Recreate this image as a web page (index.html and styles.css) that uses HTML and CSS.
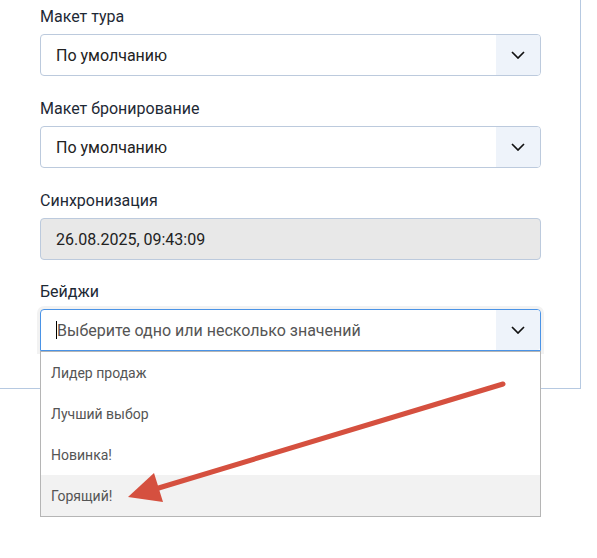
FILE: index.html
```html
<!DOCTYPE html>
<html lang="ru">

<head>
    <meta charset="UTF-8">
    <meta name="viewport" content="width=device-width, initial-scale=1.0">
    <title>Настройки тура</title>
    <link rel="stylesheet" href="styles.css">
</head>

<body>
    <div class="panel">
        <div class="field">
            <label class="field-label">Макет тура</label>
            <div class="select">
                <div class="select-value">По умолчанию</div>
                <div class="select-btn">
                    <svg width="14" height="8" viewBox="0 0 14 8"><path d="M1 1l6 6 6-6" fill="none" stroke="#111" stroke-width="1.7"/></svg>
                </div>
            </div>
        </div>

        <div class="field">
            <label class="field-label">Макет бронирование</label>
            <div class="select">
                <div class="select-value">По умолчанию</div>
                <div class="select-btn">
                    <svg width="14" height="8" viewBox="0 0 14 8"><path d="M1 1l6 6 6-6" fill="none" stroke="#111" stroke-width="1.7"/></svg>
                </div>
            </div>
        </div>

        <div class="field field-sync">
            <label class="field-label">Синхронизация</label>
            <div class="input-readonly">26.08.2025, 09:43:09</div>
        </div>

        <div class="field field-last">
            <label class="field-label">Бейджи</label>
            <div class="select select-open">
                <div class="select-value placeholder"><span class="caret"></span>Выберите одно или несколько значений</div>
                <div class="select-btn">
                    <svg width="14" height="8" viewBox="0 0 14 8"><path d="M1 1l6 6 6-6" fill="none" stroke="#111" stroke-width="1.7"/></svg>
                </div>
            </div>
        </div>
    </div>

    <!-- dropdown of the badges select, hangs below the panel -->
    <ul class="options">
        <li>Лидер продаж</li>
        <li>Лучший выбор</li>
        <li>Новинка!</li>
        <li class="hover">Горящий!</li>
    </ul>

    <!-- pointer arrow drawn over the list -->
    <svg class="pointer" width="597" height="558" viewBox="0 0 597 558">
        <line x1="503" y1="384" x2="152" y2="490" stroke="#d5503f" stroke-width="5" stroke-linecap="round"/>
        <polygon points="128,497 154,473 163,502" fill="#d5503f"/>
    </svg>
</body>

</html>
```

FILE: styles.css
```css
body {
    margin: 0;
    font-family: Roboto, "Liberation Sans", Arial, sans-serif;
    background-color: #fff;
    color: #1e2935;
}

.panel {
    box-sizing: border-box;
    width: 601px;
    margin: -20px 0 0 -20px;
    padding: 27px 39px 37px 60px;
    border: 1px solid #b6c9e1;
    border-top: none;
    border-left: none;
}

.field {
    margin-bottom: 23px;
}

.field-sync {
    margin-bottom: 22px;
}

.field-last {
    margin-bottom: 0;
}

.field-label {
    display: block;
    font-size: 16px;
    line-height: 20px;
    margin-bottom: 7px;
}

.select {
    display: flex;
    box-sizing: border-box;
    height: 42px;
    border: 1px solid #bccadd;
    border-radius: 4px;
    background: #fff;
}

.select-value {
    flex: 1;
    display: flex;
    align-items: center;
    padding: 0 15px;
    font-size: 16px;
    color: #222;
}

.select-btn {
    width: 44px;
    display: flex;
    align-items: center;
    justify-content: center;
    background-color: #eef3fa;
    border-radius: 0 3px 3px 0;
}

.input-readonly {
    box-sizing: border-box;
    height: 42px;
    display: flex;
    align-items: center;
    padding: 0 15px;
    font-size: 16px;
    color: #222;
    background-color: #e8e8e8;
    border: 1px solid #bccadd;
    border-radius: 4px;
}

/* open multiselect */
.select-open {
    border-color: #4a93e6;
    border-radius: 4px 4px 0 0;
    box-shadow: 0 0 0 3px rgba(0, 0, 0, 0.05);
}

.placeholder {
    color: #555;
}

.caret {
    display: inline-block;
    width: 1px;
    height: 18px;
    background: #000;
}

.options {
    width: 501px;
    box-sizing: border-box;
    margin: -38px 0 0 40px;
    padding: 0;
    list-style: none;
    background: #fff;
    border: 1px solid #b5b5b5;
}

.options li {
    height: 41px;
    display: flex;
    align-items: center;
    padding: 0 10px;
    font-size: 14px;
    color: #555;
}

.options li.hover {
    background-color: #f2f2f2;
}

.pointer {
    position: absolute;
    top: 0;
    left: 0;
    pointer-events: none;
}
```
